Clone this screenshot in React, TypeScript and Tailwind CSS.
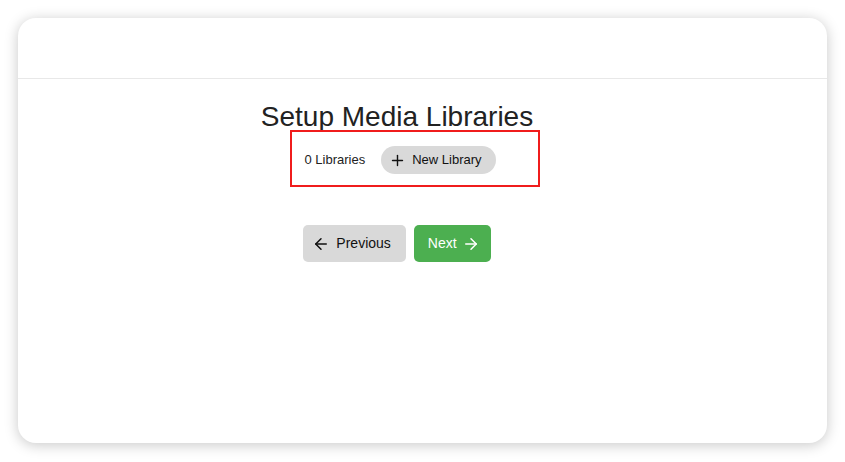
import { ArrowLeft, ArrowRight, Plus } from "lucide-react";

const App: React.FC = () => {
  return (
    <div className="w-[845px] h-[462px] bg-white p-[18px] font-['Liberation_Sans',Arial,sans-serif]">
      <div className="flex flex-col h-[425px] bg-white rounded-[18px] shadow-[0_2px_14px_rgba(0,0,0,0.22)] overflow-hidden">
        <div className="h-[61px] border-b border-[#e8e8e8] shrink-0"></div>
        <div className="flex flex-col items-center pr-[51px] pt-[21px]">
          <h1 className="text-[28px] leading-[34px] text-[#222]">Setup Media Libraries</h1>
          <div className="relative flex items-center gap-4 mt-3 ml-[6px]">
            <span className="text-[13px] text-[#222]">0 Libraries</span>
            <button className="flex items-center gap-[6px] h-[28px] pl-[8px] pr-[14px] rounded-full bg-[#d9d9d9] text-[13px] text-[#111]">
              <Plus size={17} strokeWidth={2} />
              New Library
            </button>
            <div className="absolute -left-[14px] -right-[44px] -top-[16px] -bottom-[13px] border-2 border-[#f01c1c] pointer-events-none"></div>
          </div>
          <div className="flex gap-2 mt-[51px]">
            <button className="flex items-center gap-[6px] h-[37px] pl-[9px] pr-[15px] rounded-[5px] bg-[#d9d9d9] text-[14px] text-[#111]">
              <ArrowLeft size={18} strokeWidth={2} />
              Previous
            </button>
            <button className="flex items-center gap-[5px] h-[37px] pl-[14px] pr-[11px] rounded-[5px] bg-[#4caf50] text-[14px] text-white">
              Next
              <ArrowRight size={18} strokeWidth={2} />
            </button>
          </div>
        </div>
      </div>
    </div>
  );
};

export default App;
